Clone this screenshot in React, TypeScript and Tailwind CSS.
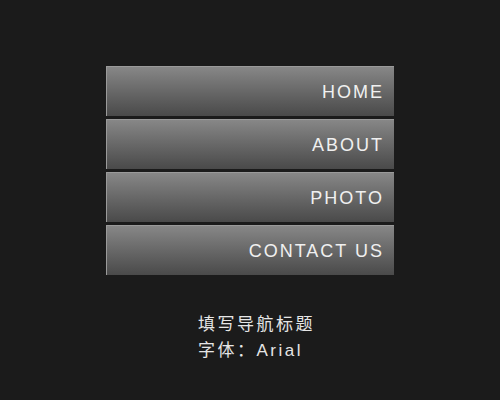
const items = ["HOME", "ABOUT", "PHOTO", "CONTACT US"];

export default function App() {
  return (
    <div
      className="w-[500px] h-[400px] bg-[#1b1b1b] flex flex-col items-center pt-[66px]"
      style={{ fontFamily: '"Liberation Sans", Arial, "Noto Sans CJK SC", sans-serif' }}
    >
      <nav className="flex flex-col gap-[3px] w-[288px]">
        {items.map((label) => (
          <a
            key={label}
            href="#"
            className="h-[50px] flex items-center justify-end pr-[10px] pt-[2px] border-t border-l border-[#9a9a9a] bg-gradient-to-b from-[#878787] to-[#4a4a4a] text-[#f0f0f0] text-[18px] tracking-[2px]"
          >
            {label}
          </a>
        ))}
      </nav>

      <div className="mt-[37px] w-[104px] text-[#e6e6e6] text-[17px] leading-[26px] tracking-[2.5px] whitespace-nowrap">
        <p>填写导航标题</p>
        <p>字体：Arial</p>
      </div>
    </div>
  );
}
